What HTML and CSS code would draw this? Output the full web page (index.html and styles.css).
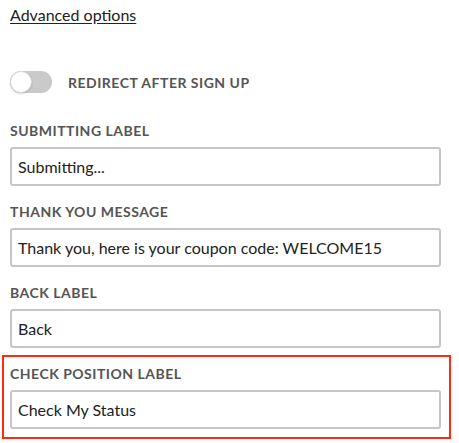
FILE: index.html
```html
<!DOCTYPE html>
<html>
<head>
<meta charset="utf-8">
<link rel="stylesheet" href="styles.css">
</head>
<body>
<div class="page">
  <a class="adv" href="#">Advanced options</a>
  <div class="toggle-row">
    <span class="toggle"><span class="knob"></span></span>
    <span class="toggle-label">REDIRECT AFTER SIGN UP</span>
  </div>
  <div class="field">
    <div class="label">SUBMITTING LABEL</div>
    <div class="input">Submitting...</div>
  </div>
  <div class="field">
    <div class="label">THANK YOU MESSAGE</div>
    <div class="input">Thank you, here is your coupon code: WELCOME15</div>
  </div>
  <div class="field">
    <div class="label">BACK LABEL</div>
    <div class="input">Back</div>
  </div>
  <div class="highlight">
    <div class="field last">
      <div class="label">CHECK POSITION LABEL</div>
      <div class="input">Check My Status</div>
    </div>
  </div>
</div>
</body>
</html>
```

FILE: styles.css
```css
html, body {
  margin: 0;
  padding: 0;
  background: #fff;
}
body {
  font-family: Lato, "Open Sans", sans-serif;
  color: #222;
}
.page {
  width: 431px;
  padding: 5px 0 0 10px;
}
.adv {
  display: inline-block;
  font-size: 16px;
  line-height: 20px;
  color: #222;
  text-decoration: underline;
  text-underline-offset: 2px;
}
.toggle-row {
  display: flex;
  align-items: center;
  margin-top: 45px;
  height: 24px;
  margin-bottom: 29px;
}
.toggle {
  width: 42px;
  height: 22px;
  border-radius: 11px;
  background: #cacaca;
  display: flex;
  align-items: center;
}
.knob {
  width: 22px;
  height: 22px;
  border-radius: 50%;
  background: #fff;
  box-sizing: border-box;
  border: 1px solid #d8d8d8;
  box-shadow: 0 1px 2px rgba(0,0,0,0.15);
}
.toggle-label {
  margin-left: 16px;
  font-size: 14px;
  font-weight: 700;
  color: #555;
  letter-spacing: 0.5px;
}
.field {
  margin-bottom: 18px;
}
.field.last {
  margin-bottom: 0;
}
.label {
  font-size: 14px;
  line-height: 16px;
  font-weight: 700;
  color: #555;
  letter-spacing: 0.5px;
  margin-bottom: 8px;
}
.input {
  height: 39px;
  box-sizing: border-box;
  border: 2px solid #c6c6c6;
  border-radius: 3px;
  padding: 0 6px;
  display: flex;
  align-items: center;
  font-size: 16px;
  color: #222;
}
.highlight {
  margin-left: -8px;
  width: 449px;
  box-sizing: border-box;
  border: 2px solid #ff2a10;
  padding: 9px 8px 8px 6px;
  margin-top: -11px;
}
```
